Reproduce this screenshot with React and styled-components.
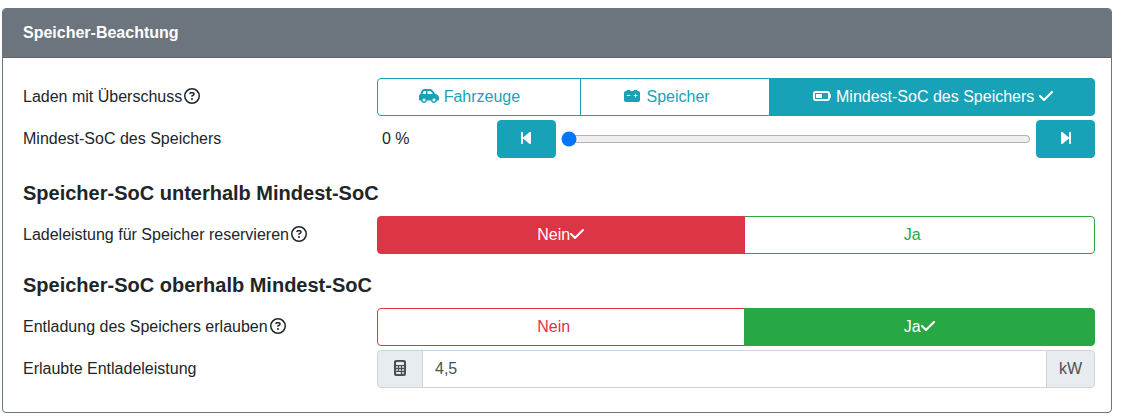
import React, { useState } from 'react'
import styled, { createGlobalStyle } from 'styled-components'
import {
    FaBackwardStep,
    FaBatteryHalf,
    FaCalculator,
    FaCarBattery,
    FaCarSide,
    FaCheck,
    FaForwardStep,
    FaRegCircleQuestion,
} from 'react-icons/fa6'

const GlobalStyle = createGlobalStyle`
    *, *::before, *::after {
        box-sizing: border-box;
    }
    body {
        margin: 0;
        background-color: #fff;
        color: #212529;
        font-family: Arial, "Liberation Sans", sans-serif;
        font-size: 16px;
        line-height: 24px;
    }
    button, input {
        font: inherit;
    }
`

const colors = {
    info: '#17a2b8',
    danger: '#dc3545',
    success: '#28a745',
}

const Card = styled.form`
    margin: 8px 10px 8px 2px;
    border: 1px solid #6c757d;
    border-radius: 4px;
    overflow: hidden;
`
const CardHeader = styled.header`
    padding: 12px 20px;
    background-color: #6c757d;
    border-bottom: 1px solid #5f676e;
    color: #fff;
    font-weight: bold;
`
const CardBody = styled.div`
    display: flex;
    flex-direction: column;
    padding: 20px 16px 20px 15px;
`
const Row = styled.div`
    display: grid;
    grid-template-columns: 1fr 2fr;
    margin-bottom: ${({ $last }) => ($last ? '8px' : '4px')};
`
const RowLabel = styled.label`
    display: block;
    padding: 7px 5px;
`
const Heading = styled.h2`
    margin: 15px 5px 11px;
    font-size: 20px;
    line-height: 24px;
`
// all icons get the same box, narrow ones are centered in it
const IconBox = styled.span`
    display: inline-flex;
    width: 20px;
    vertical-align: -2px;

    svg {
        width: 20px;
        height: 16px;
    }
`
const CheckMark = styled(FaCheck)`
    width: 14px;
    height: 16px;
    vertical-align: -2px;
    visibility: ${({ $visible }) => ($visible ? 'visible' : 'hidden')};
`
const Group = styled.div`
    display: flex;
`
const Choice = styled.label`
    position: relative;
    z-index: ${({ $active }) => ($active ? 1 : 0)};
    flex: 1 1 auto;
    padding: 6px 12px;
    border: 1px solid ${({ $color }) => colors[$color]};
    background-color: ${({ $active, $color }) => ($active ? colors[$color] : '#fff')};
    color: ${({ $active, $color }) => ($active ? '#fff' : colors[$color])};
    text-align: center;
    white-space: nowrap;
    cursor: pointer;

    &:first-child {
        border-radius: 4px 0 0 4px;
    }
    &:last-child {
        border-radius: 0 4px 4px 0;
    }
    & + & {
        margin-left: -1px;
    }
`
const HiddenRadio = styled.input`
    position: absolute;
    opacity: 0;
    pointer-events: none;
`
const RangeRow = styled.div`
    display: grid;
    grid-template-columns: 1fr 5fr;
`
const RangeValue = styled.output`
    padding: 7px 5px;
`
const RangeControls = styled.div`
    display: flex;
    align-items: center;
    gap: 5px;
`
const StepButton = styled.button`
    flex: 0 0 59px;
    height: 38px;
    padding: 6px 12px;
    border: 1px solid #17a2b8;
    border-radius: 4px;
    background-color: #17a2b8;
    color: #fff;
    cursor: pointer;
`
const Range = styled.input`
    flex: 1;
    min-width: 0;
    margin: 0;
`
const Addon = styled.span`
    padding: 6px 12px;
    border: 1px solid #ced4da;
    border-radius: ${({ $end }) => ($end ? '0 4px 4px 0' : '4px 0 0 4px')};
    background-color: #e9ecef;
    color: #495057;
`
const NumberField = styled.input`
    flex: 1;
    min-width: 0;
    height: 38px;
    margin: 0 -1px;
    padding: 6px 12px;
    border: 1px solid #ced4da;
    background-color: #fff;
    color: #495057;
`

const Help = () => <IconBox><FaRegCircleQuestion /></IconBox>

const ButtonGroup = ({ name, label, options, value, onChange }) => {
    return (
        <Group role="radiogroup" aria-labelledby={label}>
            {options.map((option) => {
                const active = option.value === value
                return (
                    <Choice key={option.value} $color={option.color} $active={active}>
                        <HiddenRadio
                            type="radio"
                            name={name}
                            checked={active}
                            onChange={() => onChange(option.value)}
                        />
                        {option.icon && <><IconBox>{option.icon}</IconBox>{' '}</>}
                        {option.text}
                        {option.icon && ' '}
                        <CheckMark $visible={active} />
                    </Choice>
                )
            })}
        </Group>
    )
}

const modes = [
    { value: 'ev', text: 'Fahrzeuge', icon: <FaCarSide />, color: 'info' },
    { value: 'bat', text: 'Speicher', icon: <FaCarBattery />, color: 'info' },
    { value: 'minSoc', text: 'Mindest-SoC des Speichers', icon: <FaBatteryHalf />, color: 'info' },
]
const yesNo = [
    { value: false, text: 'Nein', color: 'danger' },
    { value: true, text: 'Ja', color: 'success' },
]

const App = () => {
    const [mode, setMode] = useState('minSoc')
    const [soc, setSoc] = useState(0)
    const [reserve, setReserve] = useState(false)
    const [discharge, setDischarge] = useState(true)
    const [power, setPower] = useState('4,5')

    return (
        <>
            <GlobalStyle />
            <Card>
                <CardHeader>Speicher-Beachtung</CardHeader>
                <CardBody>
                    <Row>
                        <RowLabel as="span" id="mode-label">Laden mit Überschuss<Help /></RowLabel>
                        <ButtonGroup name="mode" label="mode-label" options={modes} value={mode} onChange={setMode} />
                    </Row>
                    <Row $last>
                        <RowLabel htmlFor="min-soc">Mindest-SoC des Speichers</RowLabel>
                        <RangeRow>
                            <RangeValue htmlFor="min-soc">{soc} %</RangeValue>
                            <RangeControls>
                                <StepButton type="button" onClick={() => setSoc(Math.max(0, soc - 5))}>
                                    <IconBox><FaBackwardStep /></IconBox>
                                </StepButton>
                                <Range
                                    id="min-soc"
                                    type="range"
                                    min="0"
                                    max="100"
                                    step="5"
                                    value={soc}
                                    onChange={(e) => setSoc(Number(e.target.value))}
                                />
                                <StepButton type="button" onClick={() => setSoc(Math.min(100, soc + 5))}>
                                    <IconBox><FaForwardStep /></IconBox>
                                </StepButton>
                            </RangeControls>
                        </RangeRow>
                    </Row>

                    <Heading>Speicher-SoC unterhalb Mindest-SoC</Heading>
                    <Row>
                        <RowLabel as="span" id="reserve-label">Ladeleistung für Speicher reservieren<Help /></RowLabel>
                        <ButtonGroup name="reserve" label="reserve-label" options={yesNo} value={reserve} onChange={setReserve} />
                    </Row>

                    <Heading>Speicher-SoC oberhalb Mindest-SoC</Heading>
                    <Row>
                        <RowLabel as="span" id="discharge-label">Entladung des Speichers erlauben<Help /></RowLabel>
                        <ButtonGroup name="discharge" label="discharge-label" options={yesNo} value={discharge} onChange={setDischarge} />
                    </Row>
                    <Row>
                        <RowLabel htmlFor="power">Erlaubte Entladeleistung</RowLabel>
                        <Group>
                            <Addon><IconBox><FaCalculator /></IconBox></Addon>
                            <NumberField
                                id="power"
                                type="text"
                                inputMode="decimal"
                                value={power}
                                onChange={(e) => setPower(e.target.value)}
                            />
                            <Addon $end>kW</Addon>
                        </Group>
                    </Row>
                </CardBody>
            </Card>
        </>
    )
}

export default App
